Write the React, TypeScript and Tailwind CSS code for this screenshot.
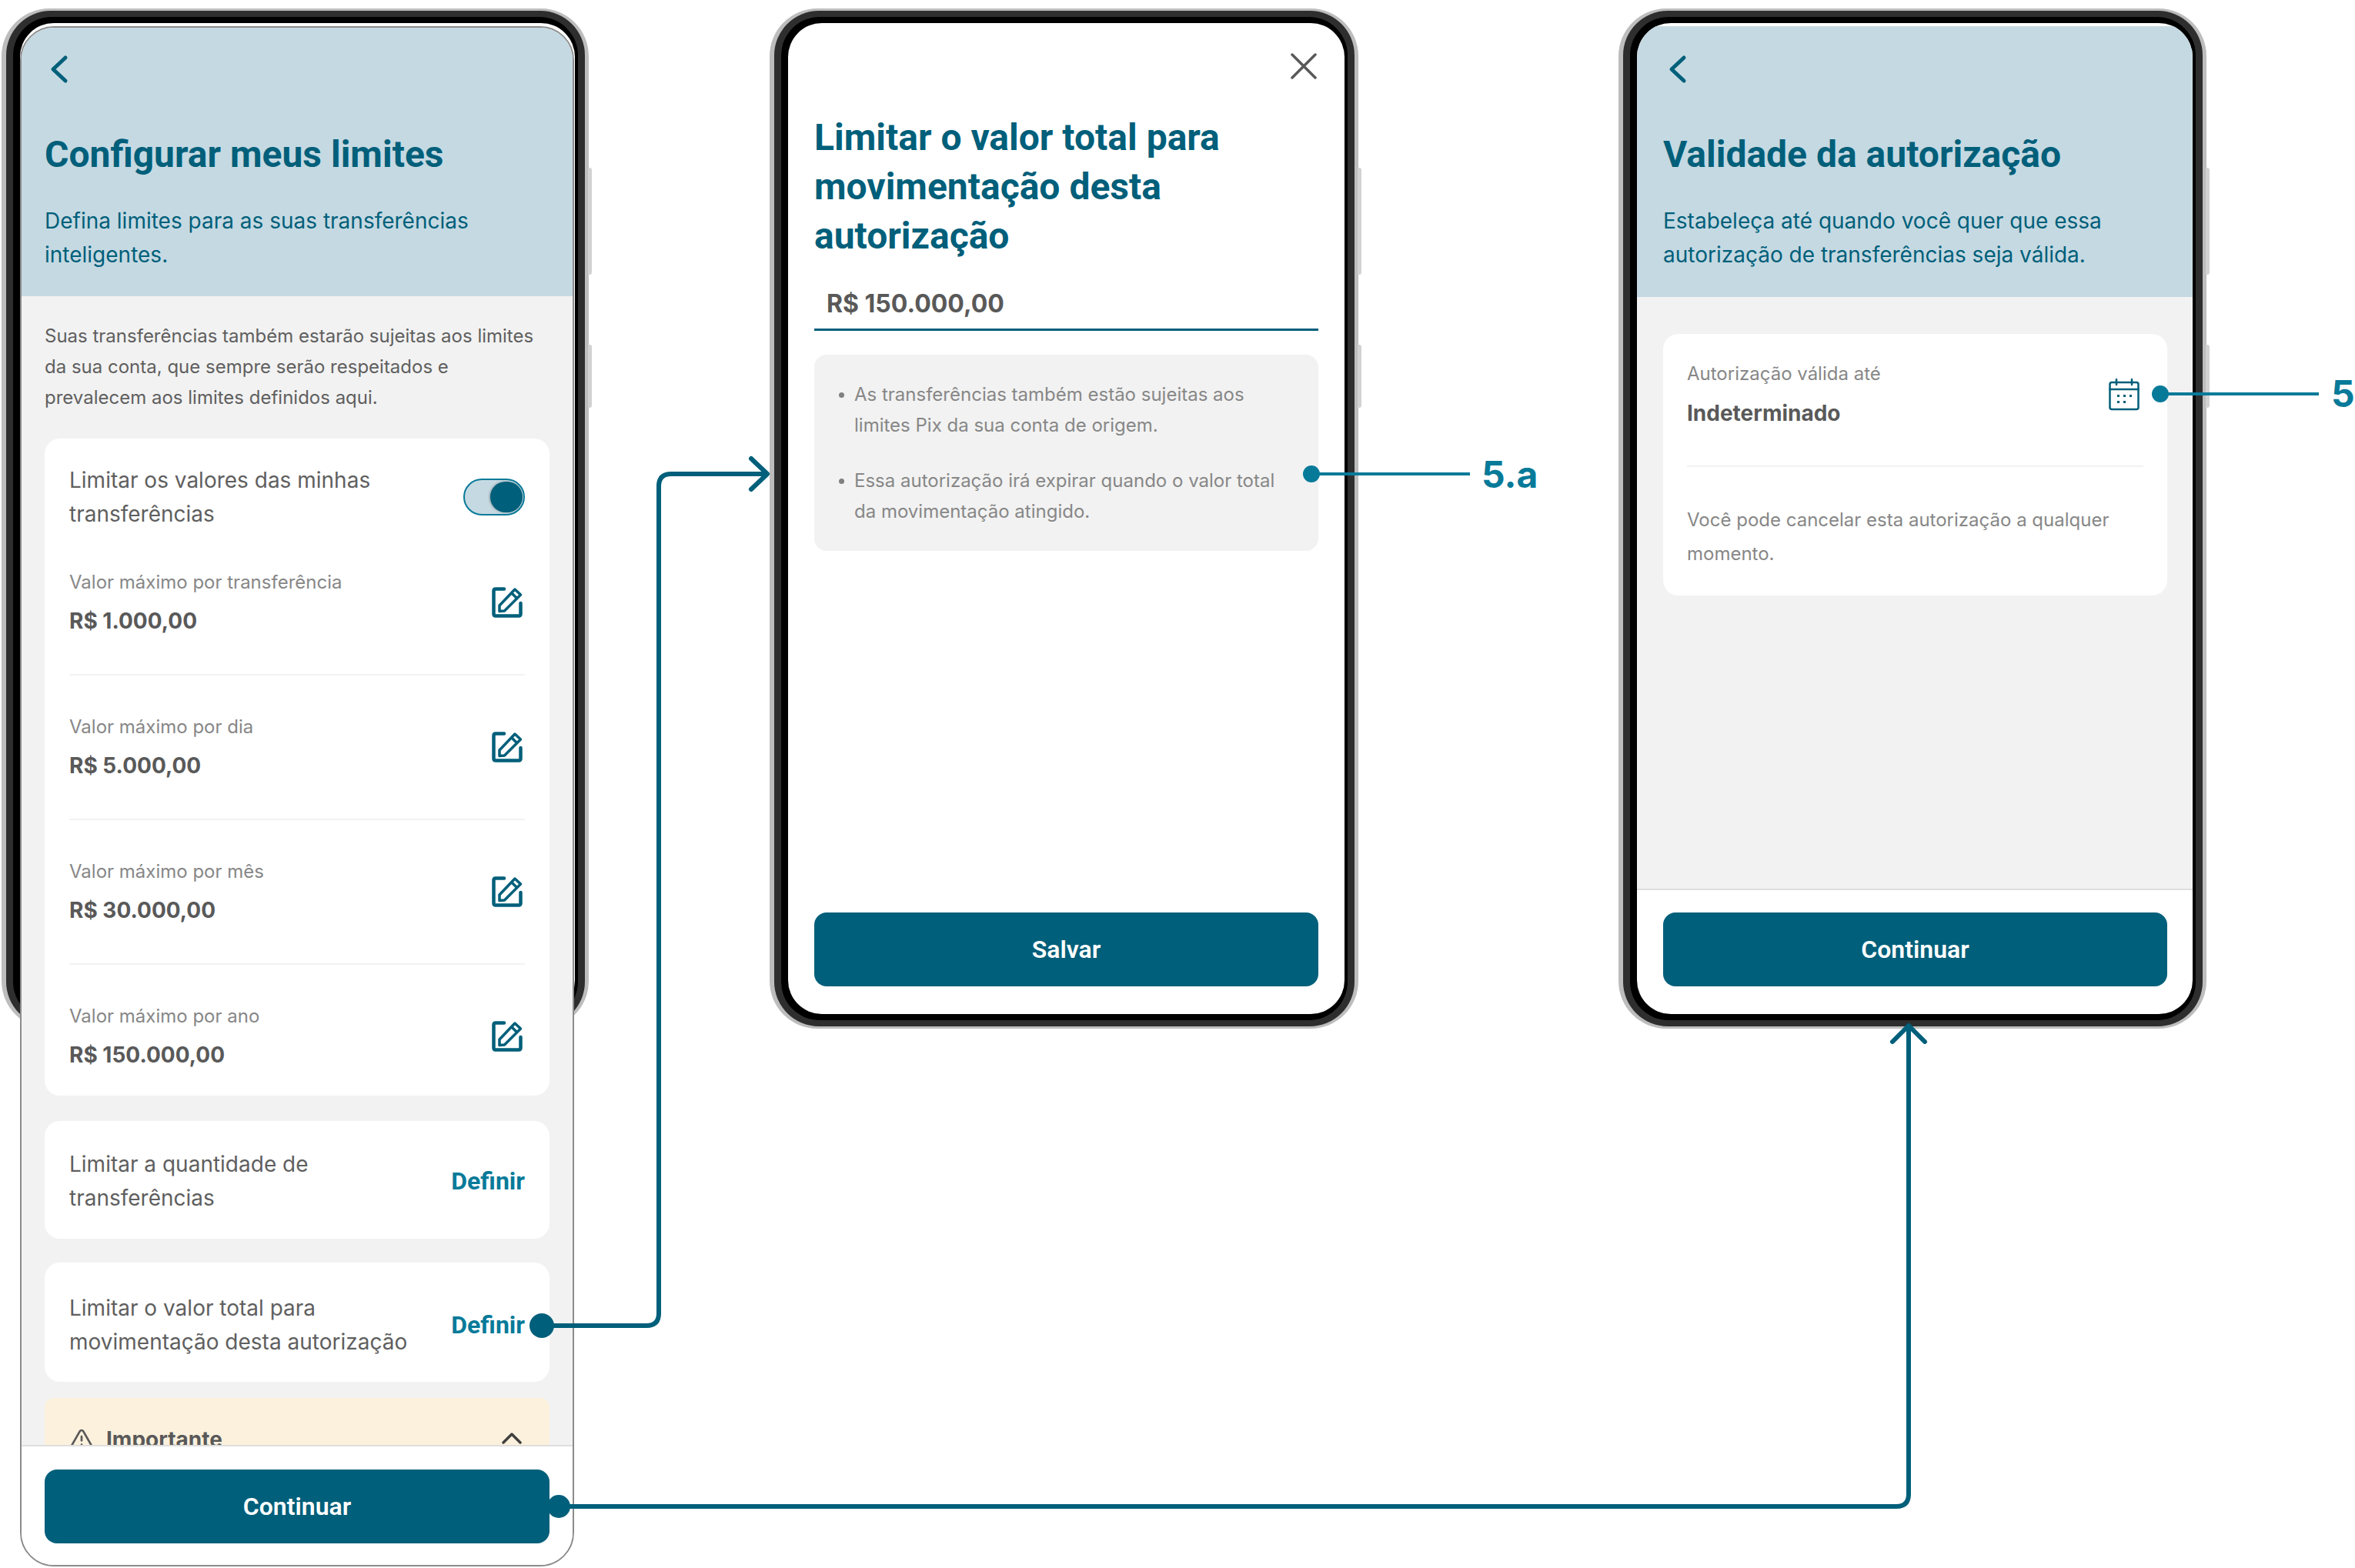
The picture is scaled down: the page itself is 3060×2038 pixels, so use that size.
import { TriangleAlert } from 'lucide-react'

const rows = [
  { label: 'Valor máximo por transferência', value: 'R$ 1.000,00' },
  { label: 'Valor máximo por dia', value: 'R$ 5.000,00' },
  { label: 'Valor máximo por mês', value: 'R$ 30.000,00' },
  { label: 'Valor máximo por ano', value: 'R$ 150.000,00' },
]

function BackIcon() {
  return (
    <svg width="24" height="38" viewBox="0 0 24 38" fill="none" className="ml-[7px] block">
      <path d="M20 4 L4 19 L20 34" stroke="#005f7a" strokeWidth="5" strokeLinecap="round" strokeLinejoin="round" />
    </svg>
  )
}

function EditIcon() {
  return (
    <svg width="40" height="40" viewBox="0 0 40 40" fill="none" className="mr-[3px] block shrink-0">
      <path
        d="M16 2.5 H5 Q2.5 2.5 2.5 5 V35 Q2.5 37.5 5 37.5 H35 Q37.5 37.5 37.5 35 V21"
        stroke="#005f7a"
        strokeWidth="4.5"
        strokeLinecap="round"
      />
      <path
        d="M30 3 L37.5 10 L16.5 31 L10 31.5 L10 24 Z M26 8 L33 15"
        stroke="#005f7a"
        strokeWidth="3.5"
        strokeLinejoin="round"
      />
    </svg>
  )
}

function CalendarIcon() {
  return (
    <svg width="40" height="42" viewBox="0 0 40 42" fill="none" className="block shrink-0">
      <rect x="1.5" y="5" width="37" height="35" rx="2.5" stroke="#005f7a" strokeWidth="2.5" />
      <path d="M1.5 14 H38.5 M10 1 V8 M30 1 V8" stroke="#005f7a" strokeWidth="2.5" strokeLinecap="round" />
      <path d="M11 21 h3 v3 h-3z M19 21 h3 v3 h-3z M27 21 h3 v3 h-3z M11 29 h3 v3 h-3z M19 29 h3 v3 h-3z" fill="#005f7a" />
    </svg>
  )
}

function CloseIcon() {
  return (
    <svg width="34" height="34" viewBox="0 0 34 34" fill="none" className="block">
      <path d="M2 2 L32 32 M32 2 L2 32" stroke="#595959" strokeWidth="3.5" strokeLinecap="round" />
    </svg>
  )
}

// device bezel, the screen goes inside or on top of it
function PhoneFrame({ className, children }: { className: string; children?: React.ReactNode }) {
  return (
    <div className={`${className} rounded-[62px] bg-[#bdbdbd] pl-[6px] pr-[5px] py-[3px]`}>
      <div className="absolute -right-[4px] top-[207px] h-[139px] w-[5px] rounded-r-[3px] bg-[#d2d2d2]" />
      <div className="absolute -right-[4px] top-[437px] h-[82px] w-[5px] rounded-r-[3px] bg-[#d2d2d2]" />
      <div className="h-full rounded-[58px] bg-[#2e2e2e] pl-[9px] pr-[9px] py-[8px]">
        <div className="h-full rounded-[50px] bg-black pl-[9px] pr-[4px] py-[8px]">{children}</div>
      </div>
    </div>
  )
}

function Header({ title, lines, pad }: { title: string; lines: string[]; pad: string }) {
  return (
    <div className={`${pad} bg-[#c5d9e2] text-[#005f7a]`}>
      <BackIcon />
      <h1 className="mt-[60px] font-['Roboto',sans-serif] text-[48px] font-bold leading-[64px]">{title}</h1>
      <p className="mt-[32px] text-[28px] leading-[44px]">
        {lines.map((l) => (
          <span key={l} className="block">
            {l}
          </span>
        ))}
      </p>
    </div>
  )
}

function Button({ label, className }: { label: string; className?: string }) {
  return (
    <div
      className={`flex h-[96px] items-center justify-center rounded-[16px] bg-[#005f7a] font-['Roboto',sans-serif] text-[32px] font-semibold text-white ${className ?? ''}`}
    >
      {label}
    </div>
  )
}

function DefineCard({ lines, className }: { lines: string[]; className: string }) {
  return (
    <div className={`flex items-center justify-between rounded-[20px] bg-white px-[32px] ${className}`}>
      <p className="text-[28px] leading-[44px] text-[#5f5f5f]">
        {lines.map((l) => (
          <span key={l} className="block">
            {l}
          </span>
        ))}
      </p>
      <span className="font-['Roboto',sans-serif] text-[32px] font-bold text-[#087a99]">Definir</span>
    </div>
  )
}

function LimitsScreen() {
  return (
    <div className="relative z-10 ml-[24px] mt-[23px] flex h-[2002px] w-[720px] flex-col overflow-hidden rounded-[44px] border-2 border-[#8c8c8c] bg-white">
      <Header
        title="Configurar meus limites"
        lines={['Defina limites para as suas transferências', 'inteligentes.']}
        pad="h-[349px] pl-[30px] pt-[35px]"
      />
      <div className="min-h-0 flex-1 overflow-hidden bg-[#f2f2f2] px-[30px] pt-[32px]">
        <p className="text-[24px] leading-[40px] text-[#5f5f5f]">
          Suas transferências também estarão sujeitas aos limites
          <br />
          da sua conta, que sempre serão respeitados e
          <br />
          prevalecem aos limites definidos aqui.
        </p>
        <div className="mt-[33px] rounded-[20px] bg-white px-[32px] pb-[31px] pt-[32px]">
          <div className="flex items-center justify-between">
            <p className="text-[28px] leading-[44px] text-[#5f5f5f]">
              Limitar os valores das minhas
              <br />
              transferências
            </p>
            <div className="flex h-[48px] w-[80px] items-center justify-end rounded-full border-2 border-[#087a99] bg-[#c5d9e2] pr-[1px]">
              <div className="h-[40px] w-[42px] rounded-full bg-[#005f7a] shadow-[-1px_0_3px_rgba(0,0,0,0.3)]" />
            </div>
          </div>
          {rows.map((r, i) => (
            <div
              key={r.label}
              className={`flex items-center justify-between pt-[47px] ${i < 3 ? 'border-b-2 border-[#f2f2f2] pb-[47px]' : ''}`}
            >
              <div>
                <div className="text-[24px] leading-[40px] text-[#878787]">{r.label}</div>
                <div className="mt-[8px] text-[28px] font-bold leading-[44px] text-[#595959]">{r.value}</div>
              </div>
              <EditIcon />
            </div>
          ))}
        </div>
        <DefineCard
          lines={['Limitar a quantidade de', 'transferências']}
          className="mt-[33px] pb-[31px] pt-[34px]"
        />
        <DefineCard
          lines={['Limitar o valor total para', 'movimentação desta autorização']}
          className="mt-[31px] pb-[30px] pt-[37px]"
        />
        <div className="mt-[21px] flex h-[100px] items-start justify-between rounded-t-[12px] bg-[#fcf1dc] pl-[32px] pr-[36px] pt-[32px]">
          <div className="flex items-center gap-[16px]">
            <TriangleAlert size={32} color="#595959" strokeWidth={2} />
            <span className="text-[28px] font-bold leading-[44px] text-[#595959]">Importante</span>
          </div>
          <svg width="26" height="16" viewBox="0 0 26 16" fill="none" className="mt-[12px]">
            <path d="M2 14 L13 3 L24 14" stroke="#404040" strokeWidth="3.5" strokeLinecap="round" strokeLinejoin="round" />
          </svg>
        </div>
      </div>
      <div className="border-t-2 border-[#dedede] bg-white px-[30px] pb-[28px] pt-[30px]">
        <Button label="Continuar" />
      </div>
    </div>
  )
}

function TotalScreen() {
  return (
    <div className="flex h-full w-full flex-col overflow-hidden rounded-[44px] bg-white">
      <div className="flex justify-end pr-[36px] pt-[39px]">
        <CloseIcon />
      </div>
      <div className="px-[34px]">
        <h1 className="mt-[44px] font-['Roboto',sans-serif] text-[48px] font-bold leading-[64px] text-[#005f7a]">
          Limitar o valor total para
          <br />
          movimentação desta
          <br />
          autorização
        </h1>
        <div className="mt-[34px] border-b-[3px] border-[#005f7a] pb-[10px] pl-[16px] text-[32px] font-bold leading-[44px] text-[#595959]">
          R$ 150.000,00
        </div>
        <ul className="mt-[31px] list-none rounded-[16px] bg-[#f2f2f2] pb-[31px] pl-[52px] pr-[20px] pt-[32px] text-[24px] leading-[40px] text-[#878787]">
          <li className="relative before:absolute before:-left-[20px] before:top-[17px] before:h-[7px] before:w-[7px] before:rounded-full before:bg-[#808080]">
            As transferências também estão sujeitas aos
            <br />
            limites Pix da sua conta de origem.
          </li>
          <li className="relative mt-[32px] before:absolute before:-left-[20px] before:top-[17px] before:h-[7px] before:w-[7px] before:rounded-full before:bg-[#808080]">
            Essa autorização irá expirar quando o valor total
            <br />
            da movimentação atingido.
          </li>
        </ul>
      </div>
      <div className="flex-1" />
      <Button label="Salvar" className="mx-[34px] mb-[36px]" />
    </div>
  )
}

function ValidityScreen() {
  return (
    <div className="flex h-full w-full flex-col overflow-hidden rounded-[44px] bg-white pt-[4px]">
      <Header
        title="Validade da autorização"
        lines={['Estabeleça até quando você quer que essa', 'autorização de transferências seja válida.']}
        pad="h-[352px] pl-[34px] pt-[37px]"
      />
      <div className="flex-1 bg-[#f2f2f2] pl-[34px] pr-[33px] pt-[48px]">
        <div className="rounded-[20px] bg-white px-[31px] pb-[32px] pt-[32px]">
          <div className="flex items-center justify-between pr-[5px]">
            <div>
              <div className="text-[24px] leading-[40px] text-[#878787]">Autorização válida até</div>
              <div className="mt-[9px] text-[28px] font-bold leading-[44px] text-[#595959]">Indeterminado</div>
            </div>
            <CalendarIcon />
          </div>
          <div className="mt-[46px] h-[2px] bg-[#f2f2f2]" />
          <p className="mt-[47px] text-[24px] leading-[44px] text-[#878787]">
            Você pode cancelar esta autorização a qualquer
            <br />
            momento.
          </p>
        </div>
      </div>
      <div className="border-t-2 border-[#dedede] pb-[36px] pl-[34px] pr-[33px] pt-[29px]">
        <Button label="Continuar" />
      </div>
    </div>
  )
}

function Connectors() {
  return (
    <svg width="3060" height="2038" viewBox="0 0 3060 2038" fill="none" className="absolute left-0 top-0 z-20">
      <g stroke="#005f7a" strokeWidth="6" strokeLinecap="round" strokeLinejoin="round">
        <path d="M704 1723 H840 Q856 1723 856 1707 V632 Q856 616 872 616 H996" />
        <path d="M976 596 L997 616 L976 636" />
        <path d="M726 1958 H2464 Q2480 1958 2480 1942 V1334" />
        <path d="M2459 1354 L2480 1333 L2501 1354" />
      </g>
      <circle cx="704" cy="1723" r="16" fill="#005f7a" />
      <circle cx="726" cy="1958" r="15" fill="#005f7a" />
      <g stroke="#087a99" strokeWidth="4">
        <path d="M1704 616 H1910" />
        <path d="M2807 512 H3013" />
      </g>
      <circle cx="1704" cy="616" r="11" fill="#087a99" />
      <circle cx="2807" cy="512" r="11" fill="#087a99" />
    </svg>
  )
}

export default function App() {
  return (
    <div className="relative h-[2038px] w-[3060px] overflow-hidden bg-white font-[Inter,sans-serif]">
      <div className="flex pl-[2px] pt-[11px]">
        <div className="relative h-[2027px] w-[763px]">
          <PhoneFrame className="absolute left-0 top-0 h-[1326px] w-[763px]">
            <div className="h-full rounded-[44px] bg-white" />
          </PhoneFrame>
          <LimitsScreen />
        </div>
        <PhoneFrame className="relative ml-[235px] h-[1326px] w-[765px]">
          <TotalScreen />
        </PhoneFrame>
        <PhoneFrame className="relative ml-[338px] h-[1326px] w-[764px]">
          <ValidityScreen />
        </PhoneFrame>
      </div>
      <Connectors />
      <span className="absolute left-[1925px] top-[588px] z-20 text-[48px] font-bold leading-[58px] text-[#087a99]">5.a</span>
      <span className="absolute left-[3029px] top-[483px] z-20 text-[48px] font-bold leading-[58px] text-[#087a99]">5</span>
    </div>
  )
}
